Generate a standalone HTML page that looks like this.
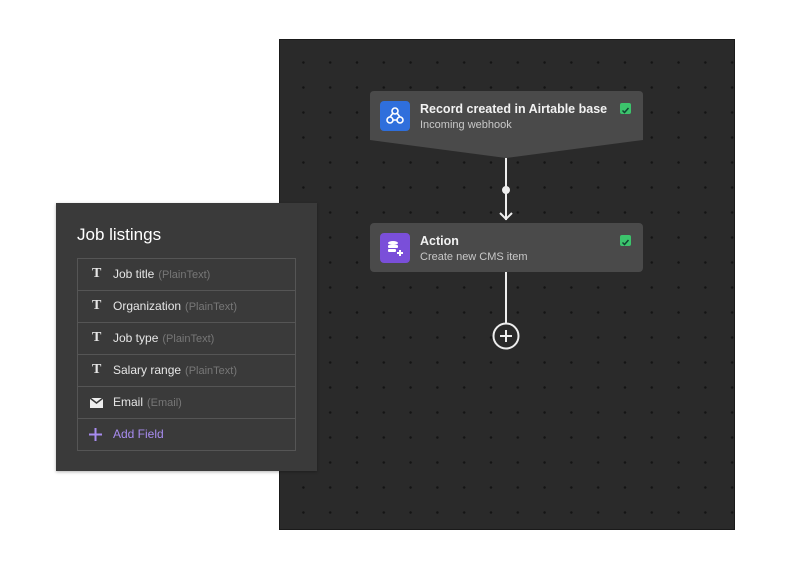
<!DOCTYPE html>
<html><head><style>
body{margin:0;width:800px;height:571px;background:#fff;position:relative;overflow:hidden;font-family:"Liberation Sans",sans-serif}
#canvas{position:absolute;left:279px;top:39px;width:454px;height:489px;background-color:#2a2a2a;border:1px solid #1a1a1a;
background-image:radial-gradient(circle,#141414 1px,transparent 1.5px);background-size:26.8px 25px;background-position:10px 10px}
.card{position:absolute;left:370px;width:273px;background:#4a4a4a;border-radius:4px;color:#fff}
.ic{position:absolute;left:10px;width:30px;height:30px;border-radius:4px}
.t{position:absolute;left:50px;font-size:12.5px;font-weight:bold;color:#f2f2f2}
.s{position:absolute;left:50px;font-size:11px;color:#c8c8c8}
.chk{position:absolute;right:12px;width:11px;height:11px;background:#3cc46c;border-radius:2px}
#panel{position:absolute;left:56px;top:203px;width:261px;height:268px;background:#3a3a3a;box-shadow:0 1px 3px rgba(0,0,0,.3)}
#panel h1{position:absolute;left:21px;top:22px;margin:0;font-size:17px;font-weight:normal;color:#fff}
.row{position:absolute;left:21px;width:217px;height:31px;border:1px solid #555;font-size:12px;color:#e6e6e6}
.row .k{position:absolute;left:14px;top:7px;font-family:"Liberation Serif",serif;font-weight:bold;font-size:14px}
.row .n{position:absolute;left:35px;top:8px}
.row .n span{color:#777;font-size:11px;margin-left:4px}
</style></head><body>
<div id="canvas"></div>
<svg style="position:absolute;left:0;top:0" width="800" height="571">
<path d="M374 91 H639 Q643 91 643 95 V140 L506 158 L370 140 V95 Q370 91 374 91Z" fill="#4a4a4a"/>
<line x1="506" y1="158" x2="506" y2="220" stroke="#eee" stroke-width="2"/>
<circle cx="506" cy="190" r="4" fill="#eee"/>
<path d="M500 213 L506 219 L512 213" fill="none" stroke="#eee" stroke-width="2"/>
<line x1="506" y1="272" x2="506" y2="323" stroke="#eee" stroke-width="2"/>
<circle cx="506" cy="336" r="12.5" fill="#2a2a2a" stroke="#eee" stroke-width="2"/>
<path d="M500 336 H512 M506 330 V342" stroke="#eee" stroke-width="2"/>
</svg>
<div class="card" style="top:91px;height:50px;background:transparent">
<div class="ic" style="top:10px;background:#2f6fdc"><svg width="30" height="30"><g fill="none" stroke="#fff" stroke-width="1.6"><circle cx="15" cy="10" r="3"/><circle cx="10" cy="19" r="3"/><circle cx="20" cy="19" r="3"/><path d="M13 12 L10 16 M17 12 L20 16 M13 19 H17"/></g></svg></div>
<div class="t" style="top:11px">Record created in Airtable base</div>
<div class="s" style="top:28px">Incoming webhook</div>
<div class="chk" style="top:12px"><svg width="11" height="11"><path d="M2.5 5.5 L4.5 7.5 L8.5 3" fill="none" stroke="#143" stroke-width="1.5"/></svg></div>
</div>
<div class="card" style="top:223px;height:49px">
<div class="ic" style="top:10px;background:#7a4fd9"><svg width="30" height="30"><g fill="#fff"><ellipse cx="13" cy="10" rx="5" ry="2"/><rect x="8" y="12" width="10" height="3" rx="1"/><rect x="8" y="16" width="8" height="3" rx="1"/><path d="M19 17h2v2h2v2h-2v2h-2v-2h-2v-2h2z"/></g></svg></div>
<div class="t" style="top:11px">Action</div>
<div class="s" style="top:28px">Create new CMS item</div>
<div class="chk" style="top:12px"><svg width="11" height="11"><path d="M2.5 5.5 L4.5 7.5 L8.5 3" fill="none" stroke="#143" stroke-width="1.5"/></svg></div>
</div>
<div id="panel"><h1>Job listings</h1>
<div class="row" style="top:55px"><span class="k">T</span><span class="n">Job title<span>(PlainText)</span></span></div>
<div class="row" style="top:87px"><span class="k">T</span><span class="n">Organization<span>(PlainText)</span></span></div>
<div class="row" style="top:119px"><span class="k">T</span><span class="n">Job type<span>(PlainText)</span></span></div>
<div class="row" style="top:151px"><span class="k">T</span><span class="n">Salary range<span>(PlainText)</span></span></div>
<div class="row" style="top:183px"><svg style="position:absolute;left:12px;top:11px" width="13" height="10"><path d="M0 0H13V10H0Z" fill="#eee"/><path d="M0 0L6.5 5L13 0" fill="none" stroke="#3a3a3a" stroke-width="1.5"/></svg><span class="n">Email<span>(Email)</span></span></div>
<div class="row" style="top:215px;height:31px"><svg style="position:absolute;left:11px;top:9px" width="13" height="13"><path d="M6.5 0V13M0 6.5H13" stroke="#a88cf0" stroke-width="2"/></svg><span class="n" style="color:#a88cf0">Add Field</span></div>
</div>
</body></html>
